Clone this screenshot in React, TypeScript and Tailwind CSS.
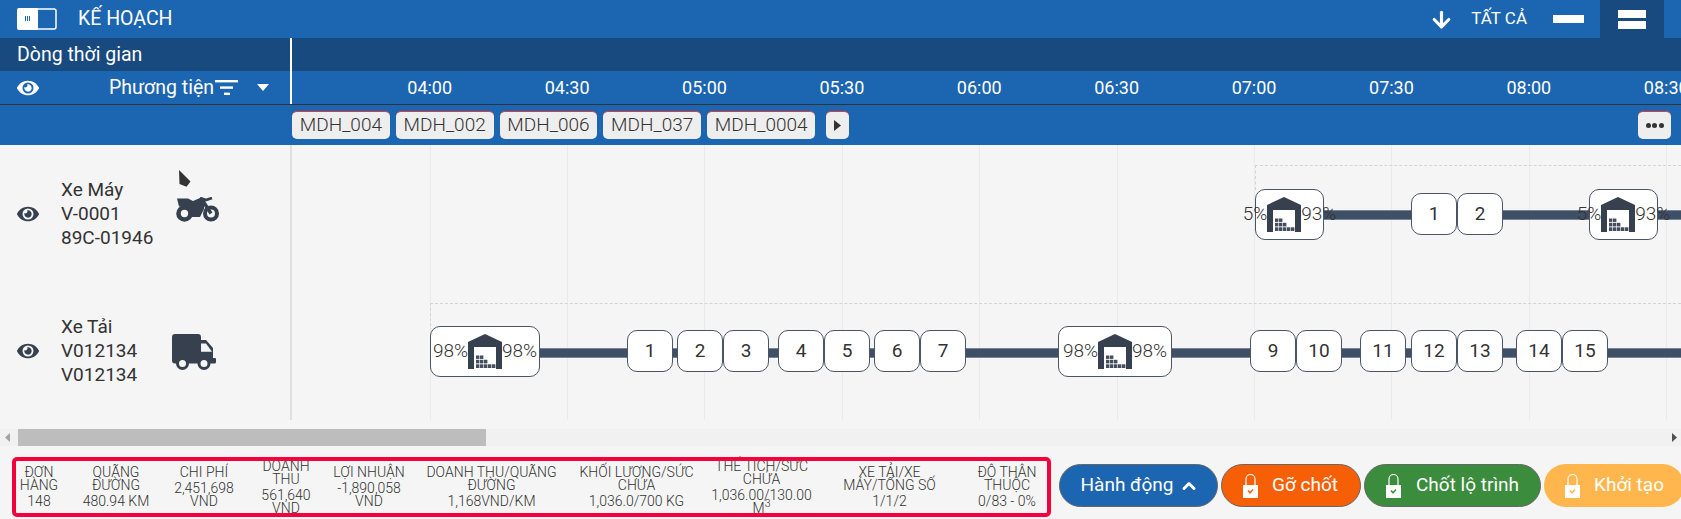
import React from "react";
import { ArrowDown, ChevronUp } from "lucide-react";
import { FaEye } from "react-icons/fa";

const times = ["04:00", "04:30", "05:00", "05:30", "06:00", "06:30", "07:00", "07:30", "08:00", "08:30"];
const chips = ["MDH_004", "MDH_002", "MDH_006", "MDH_037", "MDH_0004"];

// left edge in page pixels, the canvas starts at x=292
const pinsRow1 = [
  { n: 1, x: 1411 },
  { n: 2, x: 1457 },
];
const pinsRow2 = [
  { n: 1, x: 627 },
  { n: 2, x: 677 },
  { n: 3, x: 723 },
  { n: 4, x: 778 },
  { n: 5, x: 824 },
  { n: 6, x: 874 },
  { n: 7, x: 920 },
  { n: 9, x: 1250 },
  { n: 10, x: 1296 },
  { n: 11, x: 1360 },
  { n: 12, x: 1411 },
  { n: 13, x: 1457 },
  { n: 14, x: 1516 },
  { n: 15, x: 1562 },
];

const stats: { title: string; value: React.ReactNode; cls: string }[] = [
  { title: "ĐƠN HÀNG", value: "148", cls: "w-[46px] ml-[0px]" },
  { title: "QUÃNG ĐƯỜNG", value: "480.94 KM", cls: "w-[80px] ml-[14px]" },
  { title: "CHI PHÍ", value: "2,451,698 VND", cls: "w-[80px] ml-[8px]" },
  { title: "DOANH THU", value: "561,640 VND", cls: "w-[60px] ml-[12px]" },
  { title: "LỢI NHUẬN", value: "-1,890,058 VND", cls: "w-[90px] ml-[8px]" },
  { title: "DOANH THU/QUÃNG ĐƯỜNG", value: "1,168VND/KM", cls: "w-[135px] ml-[10px]" },
  { title: "KHỐI LƯỢNG/SỨC CHỨA", value: "1,036.0/700 KG", cls: "w-[125px] ml-[15px]" },
  {
    title: "THỂ TÍCH/SỨC CHỨA",
    value: (
      <>
        1,036.00/130.00 M<sup>3</sup>
      </>
    ),
    cls: "w-[115px] ml-[5px]",
  },
  { title: "XE TẢI/XE MÁY/TỔNG SỐ", value: "1/1/2", cls: "w-[105px] ml-[18px]" },
  { title: "ĐỘ THÂN THUỘC", value: "0/83 - 0%", cls: "w-[70px] ml-[30px]" },
];

const Warehouse = () => (
  <svg viewBox="0 0 34 35" className="w-[34px] h-[35px] shrink-0">
    <path d="M0 8 L17 0 L34 8 V35 H28 V13 H6 V35 H0 Z" fill="#36404f" />
    <g fill="#454e5d">
      <rect x="8" y="21.5" width="3.4" height="3.4" />
      <rect x="12" y="21.5" width="3.4" height="3.4" />
      <rect x="8" y="25.8" width="3.4" height="3.6" />
      <rect x="12" y="25.8" width="3.4" height="3.6" />
      <rect x="16" y="25.8" width="3.4" height="3.6" />
      <rect x="8" y="30.3" width="3.4" height="3.7" />
      <rect x="12" y="30.3" width="3.4" height="3.7" />
      <rect x="16" y="30.3" width="3.4" height="3.7" />
      <rect x="20" y="30.3" width="3.4" height="3.7" />
      <rect x="24" y="30.3" width="3.4" height="3.7" />
    </g>
  </svg>
);

const Lock = ({ check }: { check: string }) => (
  <svg viewBox="0 0 15 24" className="w-[15px] h-[24px] shrink-0">
    <path d="M3 11 V5 a4.5 4.5 0 0 1 9 0 V11" fill="none" stroke="#fff" strokeWidth="1.2" />
    <rect x="0" y="11" width="15" height="13" fill="#fff" />
    <path d="M5 16.5 L7 18.8 L10 15.5" fill="none" stroke={check} strokeWidth="1.5" />
  </svg>
);

const Motorbike = () => (
  <svg viewBox="0 0 44 25" className="absolute left-[176px] top-[52px] w-[44px] h-[25px]" fill="#36404f">
    <circle cx="8.5" cy="16.5" r="6" fill="none" stroke="#36404f" strokeWidth="4.6" />
    <circle cx="35" cy="16.5" r="6" fill="none" stroke="#36404f" strokeWidth="4" />
    <path d="M1 1.5 L12 1.5 L17 4 L24 1 L29 5 L28 12 L24 20 H14 C14 14 9 9.5 3 9.5 Z" />
    <path d="M26 2.5 L35 16.5" fill="none" stroke="#36404f" strokeWidth="3.4" />
    <path d="M24 1 L30 3 L36 1" fill="none" stroke="#36404f" strokeWidth="2.8" />
  </svg>
);

const Truck = () => (
  <svg viewBox="0 0 44 36" className="absolute left-[172px] top-[51px] w-[44px] h-[36px]">
    <path
      d="M3 0 H26 a3 3 0 0 1 3 3 V6 H34 L41 14 V24 H43 a1 1 0 0 1 1 1 V28 a1.5 1.5 0 0 1 -1.5 1.5 H3 a3 3 0 0 1 -3 -3 V3 a3 3 0 0 1 3 -3 Z"
      fill="#36404f"
    />
    <path d="M29 9.5 H34 L40 17.8 H29 Z" fill="#f5f5f5" />
    <circle cx="10.5" cy="29.5" r="5" fill="#f5f5f5" stroke="#36404f" strokeWidth="3" />
    <circle cx="32" cy="29.5" r="5" fill="#f5f5f5" stroke="#36404f" strokeWidth="3" />
  </svg>
);

const Depot = ({ x, y, w, left, right }: { x: number; y: number; w: number; left: string; right: string }) => (
  <div
    className="absolute h-[51px] bg-white border border-[#4a5568] rounded-[10px] flex items-center justify-center text-[19px] font-light text-[#333] whitespace-nowrap"
    style={{ left: x - 292, top: y - 145, width: w }}
  >
    <span className="shrink-0">{left}</span>
    <Warehouse />
    <span className="shrink-0">{right}</span>
  </div>
);

const Pin = ({ n, x, y }: { n: number; x: number; y: number }) => (
  <div
    className="absolute w-[46px] h-[42px] bg-white border border-[#4a5568] rounded-[10px] flex items-center justify-center text-[19px] text-[#333]"
    style={{ left: x - 292, top: y - 145 }}
  >
    {n}
  </div>
);

const VehicleRow = ({ lines, icon }: { lines: string[]; icon: React.ReactNode }) => (
  <div className="h-[137.5px] flex items-center pl-[17px] relative">
    <FaEye className="w-[22px] h-[22px] text-[#36404f] shrink-0" />
    <div className="ml-[22px] text-[19px] leading-[24px] text-[#333]">
      {lines.map((l, i) => (
        <div key={i}>{l}</div>
      ))}
    </div>
    {icon}
  </div>
);

export default function App() {
  return (
    <div className="w-[1681px] h-[519px] overflow-hidden bg-[#f5f5f5] font-[family-name:Roboto,sans-serif]">
      {/* top bar */}
      <div className="h-[38px] bg-[#1c65b0] flex items-center text-white">
        <svg viewBox="0 0 40 22" className="w-[40px] h-[22px] ml-[17px]">
          <rect x="1" y="1" width="38" height="20" rx="2" fill="none" stroke="#fff" strokeWidth="1.5" />
          <path d="M2 0 H21 V22 H2 a2 2 0 0 1 -2 -2 V2 a2 2 0 0 1 2 -2 Z" fill="#fff" />
          <path d="M8.5 8 V13 M10.5 8 V13 M12.5 8 V13" stroke="#1c65b0" strokeWidth="1" />
        </svg>
        <span className="ml-[21px] text-[19.5px]">KẾ HOẠCH</span>
        <ArrowDown className="ml-auto w-[25px] h-[25px]" strokeWidth={3} />
        <span className="ml-[17px] text-[17px]">TẤT CẢ</span>
        <div className="ml-[26px] w-[31px] h-[8px] bg-white" />
        <div className="ml-[16px] mr-[17px] w-[64px] h-full bg-[#18497f] flex flex-col items-center justify-center gap-[3px]">
          <div className="w-[28px] h-[8px] bg-white" />
          <div className="w-[28px] h-[8px] bg-white" />
        </div>
      </div>

      {/* timeline label */}
      <div className="h-[33px] bg-[#18497f] flex text-white">
        <div className="w-[290px] pl-[17px] pt-[1px] flex items-center text-[19.5px]">Dòng thời gian</div>
        <div className="w-[2px] bg-white" />
      </div>

      {/* vehicle header and hours */}
      <div className="h-[34px] bg-[#1c65b0] border-b border-[#333] flex text-white">
        <div className="w-[290px] pl-[17px] flex items-center text-[19.5px] relative">
          <FaEye className="w-[22px] h-[22px] shrink-0" />
          <span className="ml-[70px]">Phương tiện</span>
          <svg viewBox="0 0 23 15" className="w-[23px] h-[15px] ml-[1px]" fill="#fff">
            <rect x="0" y="0" width="23" height="2.4" />
            <rect x="5" y="6.4" width="13" height="2.4" />
            <rect x="9" y="12.6" width="6" height="2.4" />
          </svg>
          <svg viewBox="0 0 12 7" className="w-[12px] h-[7px] ml-[19px]" fill="#fff">
            <path d="M0 0 H12 L6 7 Z" />
          </svg>
        </div>
        <div className="w-[2px] bg-white" />
        <div className="flex-1 overflow-hidden flex items-center pl-[69px] text-[18px]">
          {times.map((t) => (
            <div key={t} className="w-[137.4px] shrink-0 text-center">
              {t}
            </div>
          ))}
        </div>
      </div>

      {/* order chips */}
      <div className="h-[40px] bg-[#1c65b0] flex items-start pt-[6px] pl-[292px] pr-[10px]">
        <div className="flex gap-[6px]">
          {chips.map((c) => (
            <div
              key={c}
              className="h-[28px] px-[7.8px] bg-[#eeeeee] border-t border-t-[#e53935] rounded-[5px] flex items-center text-[19px] font-light text-[#333]"
            >
              {c}
            </div>
          ))}
          <div className="ml-[5px] w-[23px] h-[28px] bg-[#eeeeee] border-t border-t-[#e53935] rounded-[5px] flex items-center justify-center">
            <svg viewBox="0 0 7 11" className="w-[7px] h-[11px]" fill="#333">
              <path d="M0 0 L7 5.5 L0 11 Z" />
            </svg>
          </div>
        </div>
        <div className="ml-auto w-[33px] h-[28px] bg-[#eeeeee] border-t border-t-[#e53935] rounded-[5px] flex items-center justify-center gap-[1.5px]">
          <div className="w-[5px] h-[5px] rounded-full bg-[#333]" />
          <div className="w-[5px] h-[5px] rounded-full bg-[#333]" />
          <div className="w-[5px] h-[5px] rounded-full bg-[#333]" />
        </div>
      </div>

      {/* gantt body */}
      <div className="h-[284px] flex">
        <div className="w-[290px] h-[275px] shrink-0">
          <VehicleRow
            lines={["Xe Máy", "V-0001", "89C-01946"]}
            icon={
              <>
                <Motorbike />
                <svg viewBox="0 0 12 17" className="absolute left-[179px] top-[25px] w-[12px] h-[17px]" fill="#333">
                  <path d="M0 0 L11.5 11.5 L7.5 16.8 L0.5 14 Z" />
                </svg>
              </>
            }
          />
          <VehicleRow lines={["Xe Tải", "V012134", "V012134"]} icon={<Truck />} />
        </div>
        <div className="w-[2px] h-[275px] bg-[#e0e0e0] shrink-0" />
        <div className="relative flex-1 h-[275px] overflow-hidden">
          {times.map((t, i) => (
            <div key={t} className="absolute top-0 bottom-0 w-px bg-[#eaeaea]" style={{ left: 137.6 + i * 137.4 }} />
          ))}

          {/* row 1 */}
          <div className="absolute left-[963px] right-0 top-[20px] border-t border-dashed border-[#d4d4d4]" />
          <div className="absolute left-[963px] top-[20px] h-[25px] border-l border-dashed border-[#d4d4d4]" />
          <div className="absolute left-[1031px] right-0 top-[65px] h-[10px] bg-[#3f4f66] border-y border-[#77839a]" />
          <Depot x={1255} y={189} w={69} left="5%" right="93%" />
          {pinsRow1.map((p) => (
            <Pin key={p.n} n={p.n} x={p.x} y={193} />
          ))}
          <Depot x={1589} y={189} w={69} left="5%" right="93%" />

          {/* row 2 */}
          <div className="absolute left-[138px] right-0 top-[158px] border-t border-dashed border-[#d4d4d4]" />
          <div className="absolute left-[138px] top-[158px] h-[23px] border-l border-dashed border-[#d4d4d4]" />
          <div className="absolute left-[247px] right-0 top-[203px] h-[10px] bg-[#3f4f66] border-y border-[#77839a]" />
          <Depot x={430} y={326} w={110} left="98%" right="98%" />
          {pinsRow2.map((p) => (
            <Pin key={p.n} n={p.n} x={p.x} y={330} />
          ))}
          <Depot x={1058} y={326} w={114} left="98%" right="98%" />
        </div>
      </div>

      {/* horizontal scrollbar */}
      <div className="h-[17px] bg-[#f1f1f1] flex items-center relative">
        <svg viewBox="0 0 5 9" className="ml-[5px] w-[5px] h-[9px]" fill="#a3a3a3">
          <path d="M5 0 L0 4.5 L5 9 Z" />
        </svg>
        <div className="ml-[8px] w-[468px] h-full bg-[#bdbdbd]" />
        <svg viewBox="0 0 5 9" className="ml-auto mr-[4px] w-[5px] h-[9px]" fill="#505050">
          <path d="M0 0 L5 4.5 L0 9 Z" />
        </svg>
      </div>

      {/* footer */}
      <div className="flex items-start pt-[11px] pl-[12px]">
        <div className="relative w-[1039px] h-[60px] shrink-0 flex items-center pl-[4px] text-[14px] leading-[13px] font-light text-[#333] text-center">
          {stats.map((s) => (
            <div key={s.title} className={`shrink-0 ${s.cls}`}>
              <div className="mb-[3px]">{s.title}</div>
              <div>{s.value}</div>
            </div>
          ))}
          <div className="absolute inset-0 border-[4px] border-[#f5003c] rounded-[5px]" />
        </div>

        <div className="ml-[8px] mt-[7px] flex gap-[3px] text-white text-[19px] h-[43px] shrink-0">
          <button className="w-[159px] pl-[3px] rounded-full bg-[#1c65b0] border border-[#666] flex items-center justify-center gap-[6px]">
            Hành động
            <ChevronUp className="w-[20px] h-[20px]" strokeWidth={3.5} />
          </button>
          <button className="w-[140px] rounded-full bg-[#f75f07] border border-[#666] flex items-center pl-[21px] gap-[14px]">
            <Lock check="#f75f07" />
            Gỡ chốt
          </button>
          <button className="w-[177px] rounded-full bg-[#3b8c3d] border border-[#666] flex items-center pl-[21px] gap-[15px]">
            <Lock check="#3b8c3d" />
            Chốt lộ trình
          </button>
          <button className="w-[140px] rounded-full bg-[#ffb74d] flex items-center pl-[21px] gap-[14px]">
            <Lock check="#ffb74d" />
            Khởi tạo
          </button>
        </div>
      </div>
    </div>
  );
}
